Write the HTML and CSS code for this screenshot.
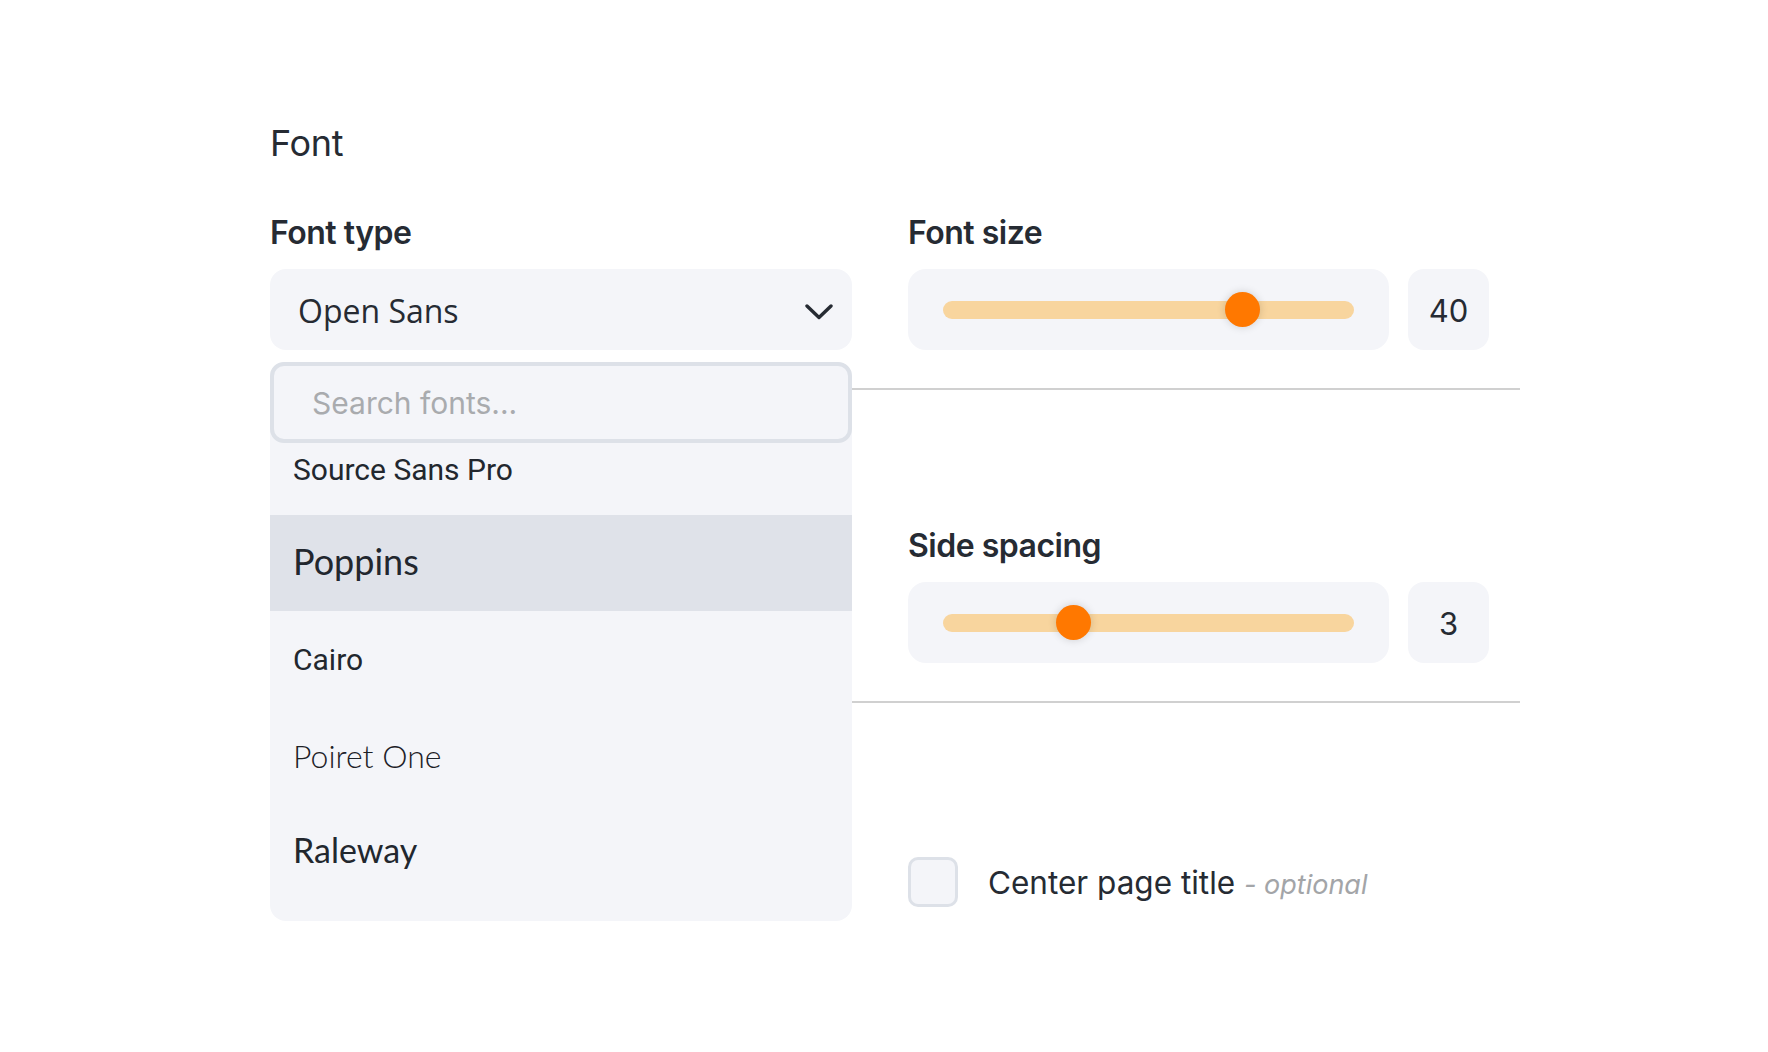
FILE: index.html
```html
<!DOCTYPE html>
<html lang="en">
<head>
    <meta charset="UTF-8">
    <meta name="viewport" content="width=device-width, initial-scale=1.0">
    <title>Font settings</title>
    <link rel="stylesheet" href="styles.css">
</head>
<body>
    <main class="settings">
        <h2 class="section-title">Font</h2>

        <div class="field-row">
            <div class="field">
                <div class="field-label">Font type</div>
                <div class="select-wrap">
                    <button class="select" type="button">
                        <span class="select-value">Open Sans</span>
                        <svg class="chevron" width="28" height="16" viewBox="0 0 28 16">
                            <polyline points="2,2 14,13.5 26,2" fill="none" stroke="#262b33" stroke-width="3.4" stroke-linecap="round" stroke-linejoin="round"/>
                        </svg>
                    </button>
                    <div class="dropdown">
                        <input class="dropdown-search" type="text" placeholder="Search fonts...">
                        <ul class="font-list">
                            <li class="font-option font-source">Source Sans Pro</li>
                            <li class="font-option font-poppins active">Poppins</li>
                            <li class="font-option font-cairo">Cairo</li>
                            <li class="font-option font-poiret">Poiret One</li>
                            <li class="font-option font-raleway">Raleway</li>
                        </ul>
                    </div>
                </div>
            </div>
            <div class="field">
                <div class="field-label">Font size</div>
                <div class="slider-group">
                    <div class="slider-box">
                        <input class="range" type="range" min="10" max="50" value="40">
                    </div>
                    <div class="slider-value">40</div>
                </div>
            </div>
        </div>

        <hr class="divider">

        <div class="field-row field-row--spacing">
            <div class="field"></div>
            <div class="field">
                <div class="field-label">Side spacing</div>
                <div class="slider-group">
                    <div class="slider-box">
                        <input class="range" type="range" min="0" max="10" value="3">
                    </div>
                    <div class="slider-value">3</div>
                </div>
            </div>
        </div>

        <hr class="divider">

        <div class="field-row field-row--check">
            <div class="field"></div>
            <label class="check">
                <input class="check-box" type="checkbox">
                <span class="check-text">Center page title <em class="optional">- optional</em></span>
            </label>
        </div>
    </main>
</body>
</html>
```

FILE: styles.css
```css
* {
    box-sizing: border-box;
}

body {
    margin: 0;
    background-color: #ffffff;
    font-family: Inter, 'Noto Sans', sans-serif;
    color: #262b33;
}

.settings {
    width: 1520px;
    padding: 121px 0 120px 270px;
}

.section-title {
    margin: 0 0 48px;
    font-size: 36px;
    line-height: 44px;
    font-weight: 400;
    letter-spacing: -0.3px;
}

.field-row {
    display: grid;
    grid-template-columns: 582px 1fr;
    column-gap: 56px;
}

.field-row--spacing {
    padding-top: 136px;
}

.field-row--check {
    padding-top: 154px;
}

.field-label {
    font-size: 32px;
    line-height: 40px;
    font-weight: 600;
    letter-spacing: -0.5px;
    margin-bottom: 16px;
}

/* custom select */
.select-wrap {
    position: relative;
}

.select {
    display: flex;
    align-items: center;
    justify-content: space-between;
    width: 100%;
    height: 81px;
    padding: 0 19px 0 28px;
    border: none;
    border-radius: 16px;
    background-color: #f4f5f9;
    color: #262b33;
    cursor: pointer;
}

.select-value {
    font-family: 'Open Sans', sans-serif;
    font-size: 32px;
    margin-top: 2px;
}

.chevron {
    margin-top: 4px;
}

.dropdown {
    position: absolute;
    top: calc(100% + 12px);
    left: 0;
    right: 0;
    z-index: 5;
    background-color: #f4f5f9;
    border-radius: 16px;
    padding-bottom: 22px;
}

.dropdown-search {
    position: relative;
    z-index: 1;
    display: block;
    width: 100%;
    height: 81px;
    padding: 0 0 0 38px;
    border: 4px solid #dde1e8;
    border-radius: 14px;
    background-color: #f4f5f9;
    font-family: Inter, sans-serif;
    font-size: 30px;
    color: #262b33;
    outline: none;
}

.dropdown-search::placeholder {
    color: #a9abae;
}

.font-list {
    list-style: none;
    margin: -24px 0 0;
    padding: 0;
}

.font-option {
    display: flex;
    align-items: center;
    height: 96px;
    padding-left: 23px;
    color: #22272e;
}

.font-option.active {
    background-color: #dfe2e9;
}

.font-source {
    font-family: Roboto, sans-serif;
    font-size: 30px;
    padding-top: 4px;
}

.font-poppins {
    font-family: Lato, sans-serif;
    font-size: 36px;
    padding-bottom: 4px;
}

.font-cairo {
    font-family: Roboto, sans-serif;
    font-size: 30px;
}

.font-poiret {
    font-family: Lato, sans-serif;
    font-weight: 300;
    font-size: 32px;
    color: #1d2127;
}

.font-raleway {
    font-family: Lato, sans-serif;
    font-size: 34px;
    padding-bottom: 4px;
}

/* sliders */
.slider-group {
    display: flex;
    gap: 19px;
    width: 581px;
}

.slider-box {
    flex: 1;
    display: flex;
    align-items: center;
    height: 81px;
    padding: 0 35px;
    border-radius: 18px;
    background-color: #f4f5f9;
}

.range {
    -webkit-appearance: none;
    appearance: none;
    width: 100%;
    height: 35px;
    margin: 0;
    background: transparent;
}

.range::-webkit-slider-runnable-track {
    height: 18px;
    border-radius: 9px;
    background-color: #f8d59e;
}

.range::-webkit-slider-thumb {
    -webkit-appearance: none;
    appearance: none;
    width: 35px;
    height: 35px;
    margin-top: -8.5px;
    border-radius: 50%;
    background-color: #ff7800;
    box-shadow: 0 0 8px rgba(0, 0, 0, 0.16);
}

.slider-value {
    display: flex;
    align-items: center;
    justify-content: center;
    width: 81px;
    height: 81px;
    padding-top: 2px;
    border-radius: 16px;
    background-color: #f4f5f9;
    font-size: 31px;
}

.divider {
    margin: 38px 0 0;
    border: none;
    border-top: 2px solid #d0d0d0;
}

/* checkbox */
.check {
    display: flex;
    align-items: center;
    gap: 30px;
}

.check-box {
    -webkit-appearance: none;
    appearance: none;
    width: 50px;
    height: 50px;
    margin: 0;
    border: 3px solid #dde1e8;
    border-radius: 10px;
    background-color: #f4f5f9;
}

.check-text {
    font-size: 31.5px;
}

.optional {
    color: #a3a5a8;
    font-size: 27px;
}
```
